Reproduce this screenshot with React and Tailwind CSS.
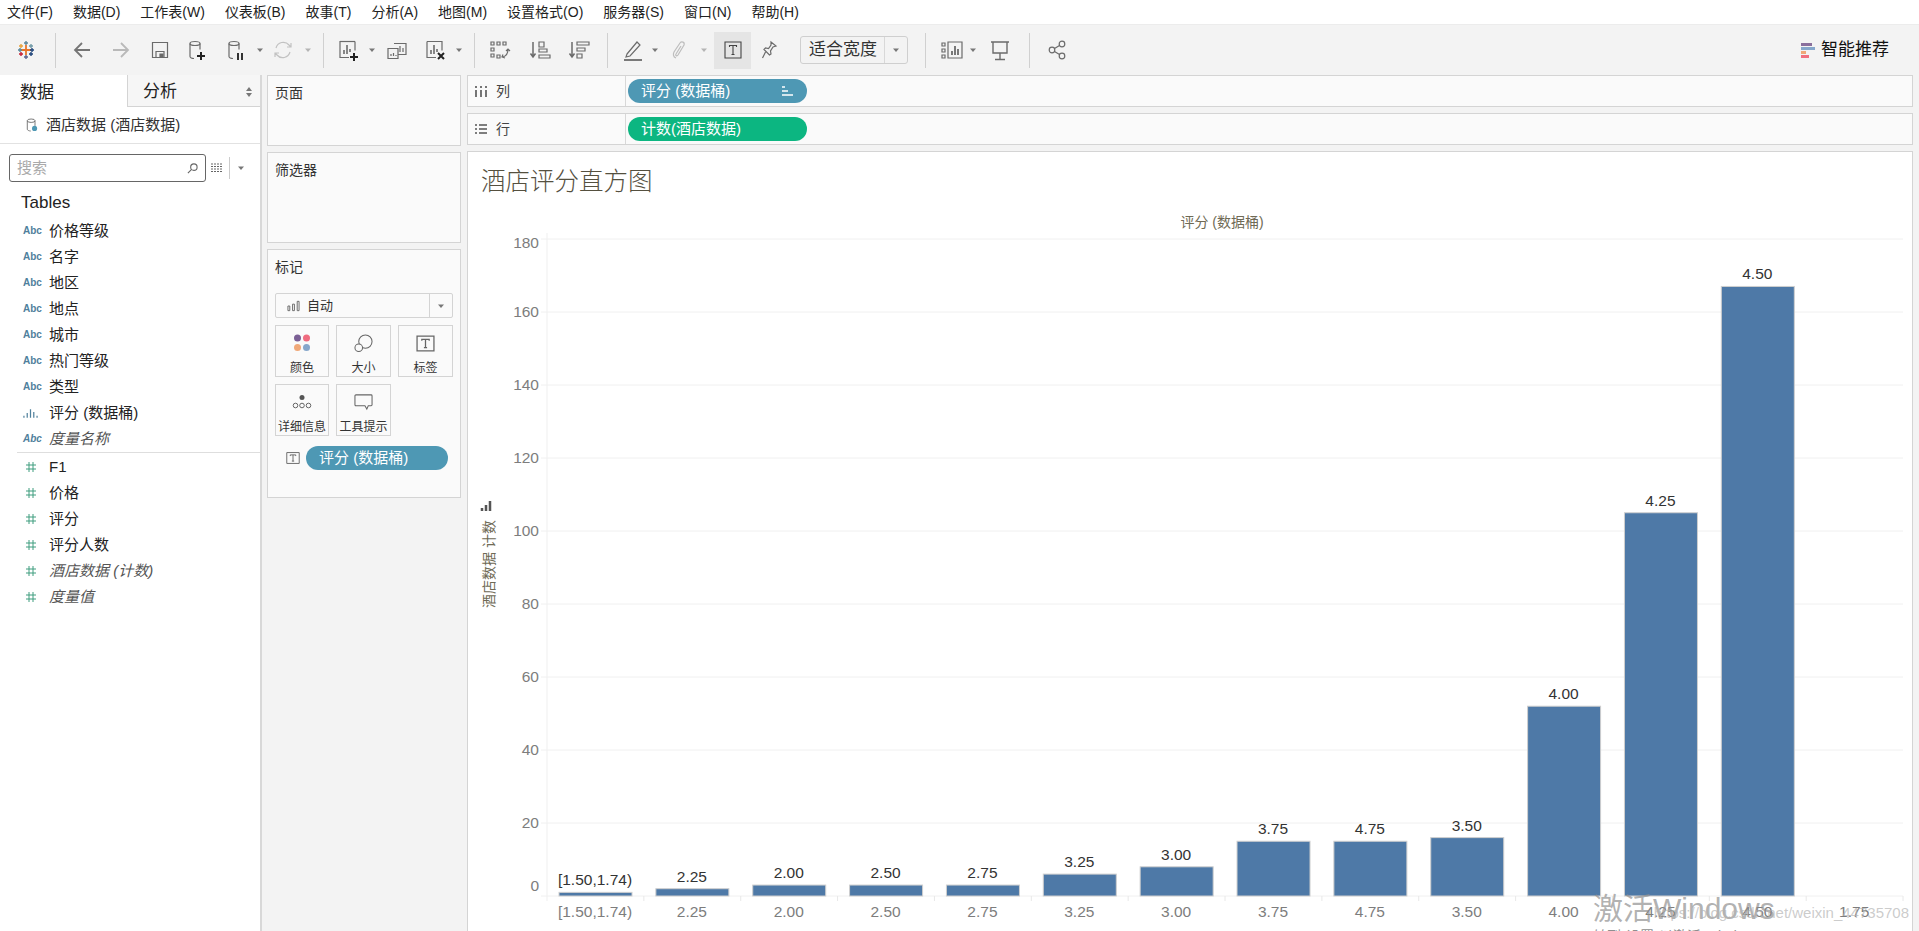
import React from 'react';

const menus = ['文件(F)', '数据(D)', '工作表(W)', '仪表板(B)', '故事(T)', '分析(A)', '地图(M)', '设置格式(O)', '服务器(S)', '窗口(N)', '帮助(H)'];

const dims = ['价格等级', '名字', '地区', '地点', '城市', '热门等级', '类型'];
const measures = [
  { name: 'F1' },
  { name: '价格' },
  { name: '评分' },
  { name: '评分人数' },
  { name: '酒店数据 (计数)', italic: true },
  { name: '度量值', italic: true },
];

const bars = [
  { label: '[1.50,1.74)', v: 1 },
  { label: '2.25', v: 2 },
  { label: '2.00', v: 3 },
  { label: '2.50', v: 3 },
  { label: '2.75', v: 3 },
  { label: '3.25', v: 6 },
  { label: '3.00', v: 8 },
  { label: '3.75', v: 15 },
  { label: '4.75', v: 15 },
  { label: '3.50', v: 16 },
  { label: '4.00', v: 52 },
  { label: '4.25', v: 105 },
  { label: '4.50', v: 167 },
  { label: '1.75', v: 0 },
];

const Ic = ({ children, className = '' }) => (
  <svg viewBox="0 0 24 24" fill="none" stroke="#6b6b6b" strokeWidth="1.2" className={`w-6 h-6 shrink-0 ${className}`}>
    {children}
  </svg>
);

const Caret = ({ className = '' }) => (
  <svg viewBox="0 0 10 10" className={`w-[10px] h-[10px] shrink-0 ${className}`}>
    <path d="M2 3.5h6L5 7z" fill="#777" />
  </svg>
);

const Sep = ({ className = '' }) => <div className={`w-px h-[35px] bg-[#d0d0d0] shrink-0 ${className}`} />;

const Cylinder = () => (
  <>
    <ellipse cx="10" cy="5.5" rx="5" ry="2" />
    <path d="M5 5.5v13c0 1 2 2 4 2M15 5.5v6" />
  </>
);

const Toolbar = () => (
  <div className="h-[51px] bg-[#f3f3f3] flex items-center pl-[14px] border-t border-[#ececec]">
    <svg viewBox="0 0 24 24" className="w-6 h-6 shrink-0" strokeWidth="1.4" fill="none">
      <path d="M12 7v10M7 12h10" stroke="#e8762b" strokeWidth="1.8" />
      <path d="M12 3v4M10 5h4" stroke="#5b879b" />
      <path d="M12 17v4M10 19h4" stroke="#5b6591" />
      <path d="M4 12h4M6 10v4" stroke="#59879b" />
      <path d="M16 12h4M18 10v4" stroke="#1f447a" />
      <path d="M7 6v4M5 8h4" stroke="#e8a33c" />
      <path d="M17 6v4M15 8h4" stroke="#7099a6" />
      <path d="M7 14v4M5 16h4" stroke="#c72035" />
      <path d="M17 14v4M15 16h4" stroke="#1f447a" />
    </svg>
    <Sep className="ml-[17px]" />
    <Ic className="ml-[14px]"><path d="M20 12H5M12 5l-7 7 7 7" stroke="#757575" strokeWidth="1.8" /></Ic>
    <Ic className="ml-[15px]"><path d="M4 12h15M12 5l7 7-7 7" stroke="#b9b9b9" strokeWidth="1.8" /></Ic>
    <Ic className="ml-[15px]"><path d="M4.5 4.5h15v15h-15z" /><path d="M8 19.5v-6h8v6" /><path d="M12 16h3v3h-3z" fill="#6b6b6b" /></Ic>
    <Ic className="ml-[13px]"><Cylinder /><path d="M16 14v8M12 18h8" stroke="#222" strokeWidth="2" /></Ic>
    <Ic className="ml-[15px]"><Cylinder /><path d="M14 15v7M18 15v7" stroke="#333" strokeWidth="2" /></Ic>
    <Caret className="ml-[7px]" />
    <Ic className="ml-[6px]"><path d="M5 10a7.5 7.5 0 0 1 13-3l2 2M19 14a7.5 7.5 0 0 1-13 3l-2-2M20 5v4h-4M4 19v-4h4" stroke="#c2c2c2" /></Ic>
    <Caret className="ml-[8px] opacity-50" />
    <Sep className="ml-[10px]" />
    <Ic className="ml-[12px]"><path d="M15 3.5H4v16h9M19 3.5v9" /><path d="M4 3.5h15" /><path d="M8 16v-4M11 16V7M14 14v-3" strokeWidth="1.6" /><path d="M18 15v8M14 19h8" stroke="#222" strokeWidth="2" /></Ic>
    <Caret className="ml-[7px]" />
    <Ic className="ml-[8px]"><path d="M9 5.5h12v11H9" /><path d="M12.500 14v-2M15 14V8M18 14v-4" /><path d="M3 10.500h10v10H3z" fill="#f3f3f3" /><path d="M6 18v-2M8.500 18v-3M11 18v-1" /></Ic>
    <Ic className="ml-[14px]"><path d="M4 3.500h15v9M13 19.500H4v-16" /><path d="M8 16v-4M11 16V7M14 14v-3" strokeWidth="1.6" /><path d="M15 15l6 6M21 15l-6 6" stroke="#222" strokeWidth="2" /></Ic>
    <Caret className="ml-[7px]" />
    <Sep className="ml-[10px]" />
    <Ic className="ml-[13px]"><path d="M3 4h3v3H3zM9 4h3v3H9zM15 4h3v3h-3zM3 10h3v3H3zM3 16h3v3H3zM9 17h3v3H9z" /><path d="M20 11c0 4-2 7-5 8M15 16.500l-1 2.500 3 1M18 13l2-2 2 2" /></Ic>
    <Ic className="ml-[16px]"><path d="M5 4v14M2.500 15.500L5 19l2.500-3.500" strokeWidth="1.5" /><path d="M11 4h5v5h-5zM11 11h8v3h-8zM11 17h11v3H11z" /></Ic>
    <Ic className="ml-[15px]"><path d="M5 4v14M2.500 15.500L5 19l2.500-3.500" strokeWidth="1.5" /><path d="M10 4h12v3H10zM10 10h8v3h-8zM10 16h5v4h-5z" /></Ic>
    <Sep className="ml-[16px]" />
    <Ic className="ml-[13px]"><path d="M6 16L16 4l3 3L9 18l-4 1z" /><path d="M3 22h18" strokeWidth="1.8" /></Ic>
    <Caret className="ml-[5px]" />
    <Ic className="ml-[8px]"><path d="M8 20c-3-1-3-4-2-6l6-9c1.500-2 5-1 4 2l-6 10c-1 1.500-3 .5-2-1l5-8" stroke="#bdbdbd" /></Ic>
    <Caret className="ml-[7px] opacity-50" />
    <div className="ml-[5px] w-[37px] h-[37px] bg-[#e5e5e5] flex items-center justify-center shrink-0">
      <svg viewBox="0 0 18 18" className="w-[18px] h-[18px]" fill="none" stroke="#444" strokeWidth="1.1">
        <path d="M1 1h16v16H1zM5.500 6V4.500h7V6M9 4.500v9M7.500 13.500h3" />
      </svg>
    </div>
    <Ic className="ml-[6px]"><path d="M14 4l5 4-3 1-2.500 4 .5 3-1.500 1-5.500-5.500 1.500-1.500 3 .5 2.500-3.500zM8.500 14L5.500 20" /></Ic>
    <div className="ml-[19px] w-[108px] h-7 border border-[#cfcfcf] rounded-[3px] flex items-center shrink-0">
      <div className="flex-1 pl-2 text-[17px] text-[#333] border-r border-[#d8d8d8] h-full flex items-center">适合宽度</div>
      <div className="w-[22px] flex justify-center"><Caret /></div>
    </div>
    <Sep className="ml-[17px]" />
    <Ic className="ml-[14px]"><path d="M2 5h3v3H2zM2 11h3v3H2zM2 17h3v3H2zM8 4h14v16H8z" /><path d="M12 17v-4M15 17V8M18 17v-6" strokeWidth="1.8" /></Ic>
    <Caret className="ml-[4px]" />
    <Ic className="ml-[10px]"><path d="M3 4h18M5 4v11h14V4M12 15v6M7 21.500h10" strokeWidth="1.4" /></Ic>
    <Sep className="ml-[17px]" />
    <Ic className="ml-[15px]"><circle cx="7" cy="12" r="2.800" /><circle cx="17" cy="6" r="2.800" /><circle cx="17" cy="18" r="2.800" /><path d="M9.500 10.500l5-3M9.500 13.500l5 3" /></Ic>
    <div className="ml-auto mr-[30px] flex items-center gap-[6px]">
      <div className="flex flex-col gap-[1px] w-[14px]">
        <div className="h-[3px] w-[11px] bg-[#8a6f9c]" />
        <div className="h-[3px] w-[14px] bg-[#86a7cb]" />
        <div className="h-[3px] w-[5px] bg-[#f0a878]" />
        <div className="h-[3px] w-[8px] bg-[#f0707f]" />
      </div>
      <span className="text-[17px] text-[#111]">智能推荐</span>
    </div>
  </div>
);

const HashIcon = () => (
  <svg viewBox="0 0 10 12" className="w-[10px] h-3 ml-[26px] mr-[13px] shrink-0" stroke="#3f9d7f" strokeWidth="1" fill="none">
    <path d="M3 1v10M7 1v10M0 4h10M0 8h10" />
  </svg>
);

const AbcIcon = () => (
  <span className="w-[17px] ml-[23px] mr-[9px] text-[10px] font-bold text-[#4f809c] shrink-0 leading-none">Abc</span>
);

const Row = ({ icon, name, italic }) => (
  <div className={`h-[26px] flex items-center text-[15px] ${italic ? 'italic text-[#555]' : 'text-[#222]'}`}>
    {icon}
    <span>{name}</span>
  </div>
);

const DataPane = () => (
  <div className="w-[262px] shrink-0 bg-white border-r-2 border-[#d8d8d8] flex flex-col">
    <div className="h-[32px] flex">
      <div className="w-[127px] pl-[20px] pt-[3px] flex items-center text-[17px] text-[#222]">数据</div>
      <div className="flex-1 pl-[15px] pt-[3px] flex items-center justify-between pr-[8px] text-[17px] text-[#222] border-l border-b border-[#d4d4d4] bg-[#f6f6f6]">
        分析
        <svg viewBox="0 0 6 10" className="w-[6px] h-[10px]"><path d="M3 0l3 4H0zM3 10L0 6h6z" fill="#777" /></svg>
      </div>
    </div>
    <div className="h-[37px] flex items-center pl-[26px] gap-[8px] border-b border-[#e2e2e2] text-[15px] text-[#333]">
      <svg viewBox="0 0 14 16" className="w-[12px] h-[14px]" fill="none" stroke="#666">
        <ellipse cx="6" cy="3" rx="4.500" ry="2" />
        <path d="M1.500 3v10c0 1 2 2 4 2M10.500 3v6" />
        <circle cx="10" cy="12" r="3" fill="#4e98b4" stroke="none" />
      </svg>
      酒店数据 (酒店数据)
    </div>
    <div className="flex items-center mt-[10px] pl-[9px]">
      <div className="w-[197px] h-[28px] border border-[#666] rounded-[3px] flex items-center justify-between px-[7px]">
        <span className="text-[15px] text-[#aaa]">搜索</span>
        <svg viewBox="0 0 12 12" className="w-[11px] h-[11px]" fill="none" stroke="#666" strokeWidth="1.200">
          <circle cx="7.500" cy="4.500" r="3.500" /><path d="M5 7l-4 4" />
        </svg>
      </div>
      <svg viewBox="0 0 12 10" className="w-[12px] h-[10px] ml-[5px]" stroke="#666" strokeWidth="1" strokeDasharray="2 1">
        <path d="M0 1h12M0 3.500h12M0 6h12M0 8.500h12" />
      </svg>
      <div className="w-px h-[22px] bg-[#ccc] ml-[6px]" />
      <Caret className="ml-[6px]" />
    </div>
    <div className="mt-[8px] pl-[21px] h-[26px] flex items-center text-[17px] text-[#222]">Tables</div>
    <div className="mt-[2px]">
      {dims.map((d) => <Row key={d} icon={<AbcIcon />} name={d} />)}
      <Row
        name="评分 (数据桶)"
        icon={
          <svg viewBox="0 0 16 10" className="w-[15px] h-[10px] ml-[23px] mr-[11px] shrink-0" stroke="#4f809c" strokeWidth="1.300">
            <path d="M1 10V8M4.500 10V5M8 10V1M11.500 10V4M15 10V8" />
          </svg>
        }
      />
      <Row icon={<AbcIcon />} name="度量名称" italic />
    </div>
    <div className="ml-[17px] h-px bg-[#dedede]" />
    <div className="mt-[1px]">
      {measures.map((m) => <Row key={m.name} icon={<HashIcon />} name={m.name} italic={m.italic} />)}
    </div>
  </div>
);

const Card = ({ title, className = '', children }) => (
  <div className={`border border-[#d4d4d4] bg-[#fafafa] px-[7px] ${className}`}>
    <div className="text-[14px] text-[#333] mt-[7px] leading-5">{title}</div>
    {children}
  </div>
);

const MarkBtn = ({ label, children }) => (
  <div className="w-full h-[52px] border border-[#d4d4d4] flex flex-col items-center pt-[5px]">
    <div className="h-[24px] flex items-center">{children}</div>
    <span className="text-[12px] text-[#333] mt-[5px] leading-4 whitespace-nowrap">{label}</span>
  </div>
);

const TBox = ({ size }) => (
  <svg viewBox="0 0 18 18" className={size} fill="none" stroke="#666" strokeWidth="1.200">
    <path d="M1 2h16v14H1zM5.500 6.500V5h7v1.500M9 5v8M7.500 13h3" />
  </svg>
);

const MiddlePane = () => (
  <div className="w-[194px] ml-[5px] shrink-0 flex flex-col gap-[6px] pb-0">
    <Card title="页面" className="h-[71px]" />
    <Card title="筛选器" className="h-[91px]" />
    <Card title="标记" className="h-[249px]">
      <div className="mt-[16px] h-[25px] border border-[#d4d4d4] rounded-[2px] flex items-center text-[13px] text-[#333]">
        <div className="flex-1 flex items-center pl-[11px] gap-[7px] border-r border-[#d4d4d4] h-full">
          <svg viewBox="0 0 14 12" className="w-[13px] h-[12px]" fill="none" stroke="#666">
            <path d="M1 6h2v5H1zM6 4h2v7H6zM11 1h2v10h-2z" />
          </svg>
          自动
        </div>
        <div className="w-[22px] flex justify-center"><Caret /></div>
      </div>
      <div className="grid grid-cols-[54px_55px_55px] gap-x-[7px] gap-y-[7px] mt-[7px]">
        <MarkBtn label="颜色">
          <svg viewBox="0 0 18 18" className="w-[18px] h-[18px]">
            <circle cx="4.500" cy="4" r="3.500" fill="#7b5f95" />
            <circle cx="13.500" cy="4" r="3.500" fill="#ef6b7f" />
            <circle cx="4.500" cy="13.500" r="3.500" fill="#f0a878" />
            <circle cx="13.500" cy="13.500" r="3.500" fill="#86a7cb" />
          </svg>
        </MarkBtn>
        <MarkBtn label="大小">
          <svg viewBox="0 0 20 20" className="w-[19px] h-[19px]" fill="none" stroke="#666" strokeWidth="1.100">
            <circle cx="12" cy="8" r="7" /><circle cx="5" cy="14.500" r="4" fill="#fafafa" />
          </svg>
        </MarkBtn>
        <MarkBtn label="标签"><TBox size="w-[19px] h-[19px]" /></MarkBtn>
        <MarkBtn label="详细信息">
          <svg viewBox="0 0 20 16" className="w-[20px] h-[16px]" fill="none" stroke="#666">
            <circle cx="10" cy="3.500" r="2.500" fill="#555" stroke="none" />
            <circle cx="3.500" cy="11.500" r="2.300" /><circle cx="10" cy="11.500" r="2.300" /><circle cx="16.500" cy="11.500" r="2.300" />
          </svg>
        </MarkBtn>
        <MarkBtn label="工具提示">
          <svg viewBox="0 0 20 18" className="w-[19px] h-[18px]" fill="none" stroke="#666" strokeWidth="1.100">
            <path d="M2 1.500h16a1 1 0 0 1 1 1V12a1 1 0 0 1-1 1h-3l-1.500 3.500-2-3.500H2a1 1 0 0 1-1-1V2.500a1 1 0 0 1 1-1z" />
          </svg>
        </MarkBtn>
      </div>
      <div className="flex items-center mt-[10px] pl-[11px]">
        <TBox size="w-[14px] h-[14px]" />
        <div className="ml-[6px] w-[142px] h-6 rounded-full bg-[#4e98b4] text-white text-[15px] flex items-center pl-[13px]">评分 (数据桶)</div>
      </div>
    </Card>
  </div>
);

const Shelf = ({ icon, label, color, text, sort }) => (
  <div className="h-[32px] border border-[#d4d4d4] bg-[#fafafa] flex items-center">
    <div className="w-[158px] h-full flex items-center pl-[7px] gap-[9px] border-r border-[#d8d8d8] text-[14px] text-[#444] shrink-0">
      {icon}
      {label}
    </div>
    <div className={`ml-[2px] w-[179px] h-6 rounded-full ${color} text-white text-[15px] flex items-center justify-between pl-[13px] pr-[14px]`}>
      {text}
      {sort}
    </div>
  </div>
);

const Chart = () => {
  const zero = 895;
  const perCount = 3.65;
  const ticks = [0, 20, 40, 60, 80, 100, 120, 140, 160, 180];
  const step = 96.86;
  return (
    <svg viewBox="468 230 1444 699" className="w-full h-[699px] block text-[15.500px]">
      <path d="M547 232V900" stroke="#efefef" />
      {ticks.map((t) => {
        const y = zero - t * perCount;
        const labelY = t === 0 ? 890 : t === 180 ? 247 : y + 5;
        return (
          <g key={t}>
            <path d={`M541 ${y}H1903`} stroke="#f0f0f0" />
            <text x="539" y={labelY} textAnchor="end" fill="#7d7d7d">{t}</text>
          </g>
        );
      })}
      {bars.map((b, i) => {
        const left = 547 + i * step;
        const h = b.v * perCount;
        const cx = left + 48;
        return (
          <g key={b.label}>
            <path d={`M${left + step} 895v5`} stroke="#e8e8e8" />
            {b.v > 0 && <rect x={left + 12} y={zero - h} width="73" height={h} fill="#4e79a7" stroke="#cfcfcf" strokeWidth="1" />}
            {b.v > 0 && <text x={cx} y={zero - h - 7} textAnchor="middle" fill="#333">{b.label}</text>}
            <text x={cx} y="916" textAnchor="middle" fill="#7d7d7d">{b.label}</text>
          </g>
        );
      })}
      <path d="M482 510v-3M486 510v-6M490 510v-10" stroke="#555" strokeWidth="2.500" />
      <text transform="translate(494 607) rotate(-90)" fontSize="14" fill="#6f6a55">酒店数据 计数</text>
    </svg>
  );
};

export default function App() {
  return (
    <div className="relative w-[1919px] h-[931px] overflow-hidden bg-[#f3f3f3] flex flex-col font-['Liberation_Sans','Noto_Sans_CJK_SC',sans-serif]">
      <div className="h-[24px] bg-white flex items-center gap-[20px] pl-[7px] text-[14px] text-[#222] shrink-0">
        {menus.map((m) => <span key={m}>{m}</span>)}
      </div>
      <Toolbar />
      <div className="flex flex-1 min-h-0">
        <DataPane />
        <MiddlePane />
        <div className="ml-[6px] w-[1446px] flex flex-col gap-[6px]">
          <Shelf
            label="列"
            color="bg-[#4e98b4]"
            text="评分 (数据桶)"
            icon={<svg viewBox="0 0 12 11" className="w-3 h-[11px]" stroke="#555" strokeWidth="1.600"><path d="M1 0v2M1 4v7M6 0v2M6 4v7M11 0v2M11 4v7" /></svg>}
            sort={<svg viewBox="0 0 11 10" className="w-[11px] h-[10px]" stroke="#fff" strokeWidth="1.600"><path d="M0 1h3M0 5h6M0 9h11" /></svg>}
          />
          <Shelf
            label="行"
            color="bg-[#0cb681]"
            text="计数(酒店数据)"
            icon={<svg viewBox="0 0 12 10" className="w-3 h-[10px]" stroke="#555" strokeWidth="1.400"><path d="M0 1h2M4 1h8M0 5h2M4 5h8M0 9h2M4 9h8" /></svg>}
          />
          <div className="flex-1 border border-[#d4d4d4] border-b-0 bg-white">
            <div className="h-[53px] pl-[13px] pt-[14px] text-[24.500px] leading-8 font-light text-[#55503f]">酒店评分直方图</div>
            <div className="h-[26px] pt-[8px] pl-[64px] flex items-center justify-center text-[14px] text-[#6f6a55]">评分 (数据桶)</div>
            <Chart />
          </div>
        </div>
      </div>
      {/* watermark over the chart */}
      <div className="absolute left-[1593px] top-[890px] text-[30px] leading-[38px] text-[#8f8f8f]/70 whitespace-nowrap">激活Windows</div>
      <div className="absolute left-[1593px] top-[926px] text-[14px] leading-5 text-[#8f8f8f] whitespace-nowrap">转到"设置"以激活 Windows。</div>
      <div className="absolute right-[10px] top-[903px] text-[15px] leading-5 text-[#b5b5b5]/70 whitespace-nowrap">https://blog.csdn.net/weixin_44735708</div>
    </div>
  );
}
